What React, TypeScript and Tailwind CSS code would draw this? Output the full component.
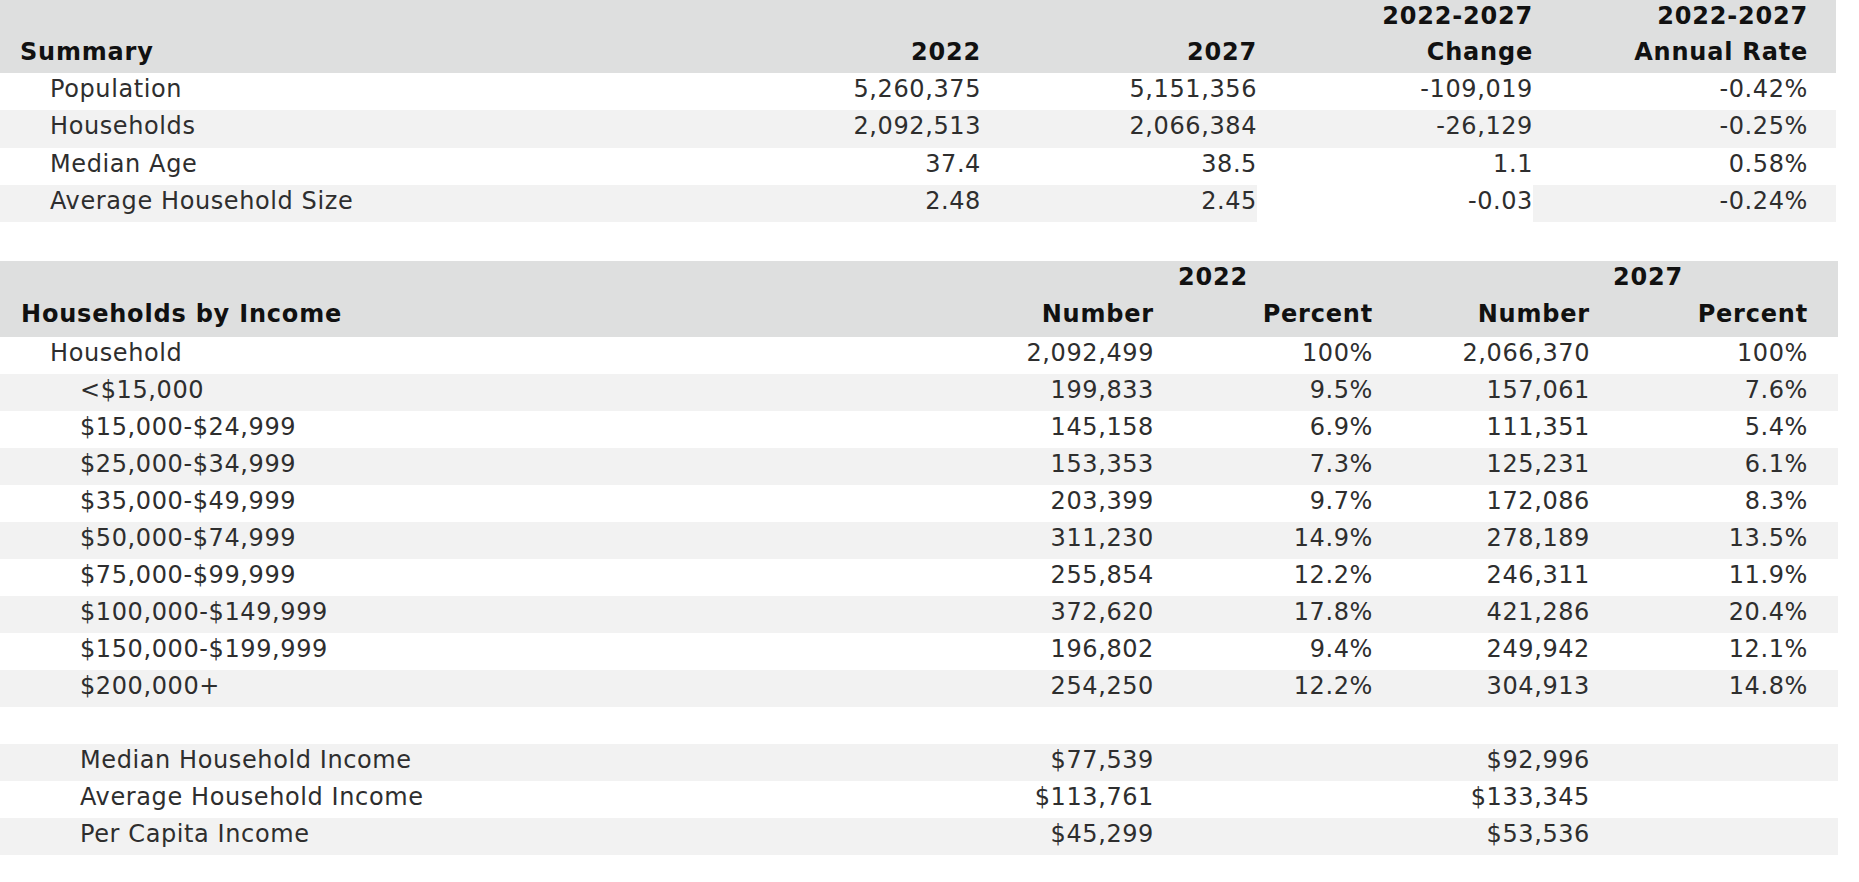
import React from 'react';

const summaryRows = [
  { label: 'Population', v2022: '5,260,375', v2027: '5,151,356', change: '-109,019', rate: '-0.42%', shaded: false },
  { label: 'Households', v2022: '2,092,513', v2027: '2,066,384', change: '-26,129', rate: '-0.25%', shaded: true },
  { label: 'Median Age', v2022: '37.4', v2027: '38.5', change: '1.1', rate: '0.58%', shaded: false },
  { label: 'Average Household Size', v2022: '2.48', v2027: '2.45', change: '-0.03', rate: '-0.24%', shaded: true, gapCell: true },
];

const incomeRows = [
  { label: 'Household', n22: '2,092,499', p22: '100%', n27: '2,066,370', p27: '100%', indent: 'pl-[50px]' },
  { label: '<$15,000', n22: '199,833', p22: '9.5%', n27: '157,061', p27: '7.6%' },
  { label: '$15,000-$24,999', n22: '145,158', p22: '6.9%', n27: '111,351', p27: '5.4%' },
  { label: '$25,000-$34,999', n22: '153,353', p22: '7.3%', n27: '125,231', p27: '6.1%' },
  { label: '$35,000-$49,999', n22: '203,399', p22: '9.7%', n27: '172,086', p27: '8.3%' },
  { label: '$50,000-$74,999', n22: '311,230', p22: '14.9%', n27: '278,189', p27: '13.5%' },
  { label: '$75,000-$99,999', n22: '255,854', p22: '12.2%', n27: '246,311', p27: '11.9%' },
  { label: '$100,000-$149,999', n22: '372,620', p22: '17.8%', n27: '421,286', p27: '20.4%' },
  { label: '$150,000-$199,999', n22: '196,802', p22: '9.4%', n27: '249,942', p27: '12.1%' },
  { label: '$200,000+', n22: '254,250', p22: '12.2%', n27: '304,913', p27: '14.8%' },
  { label: '', n22: '', p22: '', n27: '', p27: '' },
  { label: 'Median Household Income', n22: '$77,539', p22: '', n27: '$92,996', p27: '' },
  { label: 'Average Household Income', n22: '$113,761', p22: '', n27: '$133,345', p27: '' },
  { label: 'Per Capita Income', n22: '$45,299', p22: '', n27: '$53,536', p27: '' },
];

const summaryCols = 'grid grid-cols-[705px_276px_276px_276px_303px]';
const incomeCols = 'grid grid-cols-[900px_254px_219px_217px_248px]';

export default function App() {
  return (
    <div className="w-[1859px] h-[882px] bg-white text-[24px] leading-[33px] tracking-[0.6px] text-[#2e2e2e] font-['DejaVu_Sans',sans-serif]">
      {/* Summary */}
      <div className="w-[1836px]">
        <div className="bg-[#dedfdf] font-bold tracking-[0.8px] text-[#111111] h-[73px]">
          <div className={`${summaryCols} h-[36px]`}>
            <div />
            <div />
            <div />
            <div className="text-right">2022-2027</div>
            <div className="text-right pr-[28px]">2022-2027</div>
          </div>
          <div className={`${summaryCols} h-[37px]`}>
            <div className="pl-[20px]">Summary</div>
            <div className="text-right">2022</div>
            <div className="text-right">2027</div>
            <div className="text-right">Change</div>
            <div className="text-right pr-[28px]">Annual Rate</div>
          </div>
        </div>
        {summaryRows.map((row) => {
          const bg = row.shaded ? 'bg-[#f2f2f2]' : 'bg-white';
          return (
            <div key={row.label} className={`${summaryCols} h-[37.3px]`}>
              <div className={`${bg} pl-[50px]`}>{row.label}</div>
              <div className={`${bg} text-right`}>{row.v2022}</div>
              <div className={`${bg} text-right`}>{row.v2027}</div>
              <div className={`${row.gapCell ? 'bg-white' : bg} text-right`}>{row.change}</div>
              <div className={`${bg} text-right pr-[28px]`}>{row.rate}</div>
            </div>
          );
        })}
      </div>

      {/* Households by Income */}
      <div className="w-[1838px] mt-[39px]">
        <div className="bg-[#dedfdf] font-bold tracking-[0.8px] text-[#111111] h-[76px]">
          <div className="grid grid-cols-[900px_473px_465px] h-[36.5px]">
            <div />
            <div className="text-right pr-[125px]">2022</div>
            <div className="text-right pr-[155px]">2027</div>
          </div>
          <div className={incomeCols}>
            <div className="pl-[21px]">Households by Income</div>
            <div className="text-right">Number</div>
            <div className="text-right">Percent</div>
            <div className="text-right">Number</div>
            <div className="text-right pr-[30px]">Percent</div>
          </div>
        </div>
        {incomeRows.map((row, i) => (
          <div
            key={i}
            className={`${incomeCols} h-[37px] ${i % 2 === 1 ? 'bg-[#f2f2f2]' : 'bg-white'}`}
          >
            <div className={row.indent ?? 'pl-[80px]'}>{row.label}</div>
            <div className="text-right">{row.n22}</div>
            <div className="text-right">{row.p22}</div>
            <div className="text-right">{row.n27}</div>
            <div className="text-right pr-[30px]">{row.p27}</div>
          </div>
        ))}
      </div>
    </div>
  );
}
